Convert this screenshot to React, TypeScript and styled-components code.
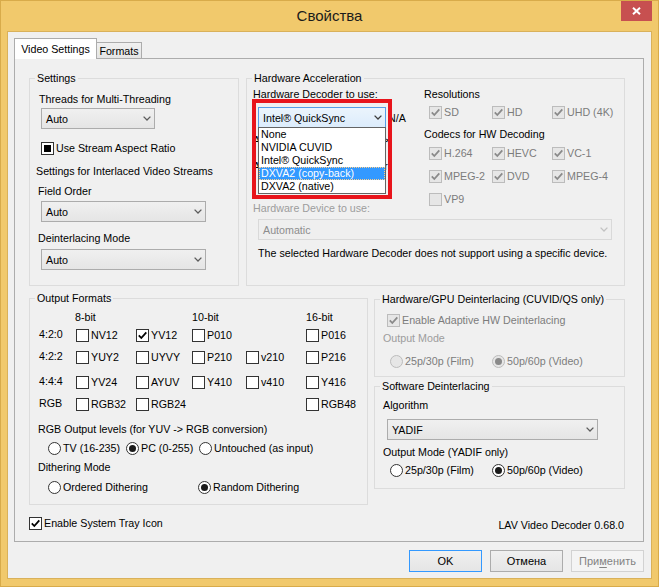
import React from "react";
import styled, { createGlobalStyle, css } from "styled-components";

const GlobalStyle = createGlobalStyle`
  html,
  body {
    margin: 0;
    padding: 0;
  }

  body {
    background: #f1c96c;
    color: #000;
    font-family: "Liberation Sans", Arial, sans-serif;
    font-size: 10.7px;
  }

  *,
  *::before,
  *::after {
    box-sizing: border-box;
  }
`;

type Space = { $mt?: number; $ml?: number };

const spacing = css<Space>`
  margin-top: ${(p) => p.$mt ?? 0}px;
  margin-left: ${(p) => p.$ml ?? 0}px;
`;

//---------------------------- window frame

const Window = styled.div`
  width: 659px;
  height: 587px;
  display: flex;
  flex-direction: column;
  background: #f1c96c;
  border: 1px solid #d8ab4a;
`;

const TitleBar = styled.div`
  height: 30px;
  display: grid;
  grid-template-columns: 1fr auto 1fr;
  align-items: start;
`;

const Title = styled.div`
  grid-column: 2;
  font-size: 15px;
  line-height: 30px;
  color: #1b1b1b;
`;

const CloseButton = styled.div`
  grid-column: 3;
  justify-self: end;
  width: 31px;
  height: 20px;
  margin-right: 6px;
  display: flex;
  align-items: center;
  justify-content: center;
  background: #c75050;
`;

const Client = styled.div`
  flex: 1;
  margin: 0 6px 7px;
  padding: 6px 7px 0 6px;
  display: flex;
  flex-direction: column;
  background: #f0f0f0;
  border: 1px solid #d9b15a;
`;

//---------------------------- tabs

const TabStrip = styled.div`
  height: 20px;
  display: flex;
  align-items: flex-end;
`;

const Tab = styled.div<{ $active?: boolean; $w: number }>`
  width: ${(p) => p.$w}px;
  display: flex;
  align-items: center;
  justify-content: center;
  white-space: nowrap;
  border: 1px solid #acacac;
  border-bottom: none;

  ${(p) =>
    p.$active
      ? css`
          position: relative;
          z-index: 1;
          height: 21px;
          margin-bottom: -1px;
          background: #fff;
        `
      : css`
          height: 16px;
          border-left: none;
          background: linear-gradient(#f0f0f0, #e5e5e5);
        `}
`;

const TabPage = styled.div`
  width: 630px;
  height: 484px;
  padding: 12px 17px 0 14px;
  display: flex;
  flex-direction: column;
  background: #f0f0f0;
  border: 1px solid #acacac;
`;

//---------------------------- group boxes

const Row = styled.div<Space & { $cols: string; $gap: number }>`
  ${spacing};
  display: grid;
  grid-template-columns: ${(p) => p.$cols};
  column-gap: ${(p) => p.$gap}px;
  align-items: start;
`;

const Column = styled.div`
  display: flex;
  flex-direction: column;
`;

const Group = styled.fieldset<Space & { $w: number; $h: number }>`
  ${spacing};
  width: ${(p) => p.$w}px;
  height: ${(p) => p.$h}px;
  min-width: 0;
  padding: 0;
  border: 1px solid #dcdcdc;
`;

const GroupTitle = styled.legend`
  height: 14px;
  margin-left: 5px;
  padding: 0 2px;
  line-height: 14px;
`;

const Stack = styled.div<Space>`
  ${spacing};
  display: flex;
  flex-direction: column;
  align-items: flex-start;
`;

const Text = styled.div<Space & { $muted?: boolean }>`
  ${spacing};
  height: 13px;
  line-height: 13px;
  white-space: nowrap;
  color: ${(p) => (p.$muted ? "#9d9d9d" : "#000")};
`;

//---------------------------- combo boxes

type ComboState = "normal" | "open" | "disabled";

const ComboBox = styled.div<Space & { $w: number; $state?: ComboState }>`
  ${spacing};
  flex: none;
  width: ${(p) => p.$w}px;
  height: 21px;
  padding: 0 3px 0 4px;
  display: flex;
  align-items: center;
  justify-content: space-between;
  white-space: nowrap;
  color: #000;
  border: 1px solid #acacac;
  background: linear-gradient(#f0f0f0, #e5e5e5);

  ${(p) =>
    p.$state === "open" &&
    css`
      border-color: #569de5;
      background: linear-gradient(#ebf4fc, #dcecfc);
    `}

  ${(p) =>
    p.$state === "disabled" &&
    css`
      color: #8d8d8d;
      border-color: #d9d9d9;
      background: #efefef;
    `}
`;

const Chevron = ({ color }: { color: string }) => (
  <svg width="8" height="5" viewBox="0 0 8 5">
    <path d="M0.6 0.6 L4 4 L7.4 0.6" fill="none" stroke={color} strokeWidth="1.3" />
  </svg>
);

interface ICombo extends Space {
  width: number;
  value: string;
  state?: ComboState;
}

const Combo: React.FunctionComponent<ICombo> = ({ width, value, state = "normal", $mt, $ml }) => (
  <ComboBox $w={width} $state={state} $mt={$mt} $ml={$ml}>
    {value}
    <Chevron color={state === "disabled" ? "#c2c2c2" : state === "open" ? "#3c3c3c" : "#5c5c5c"} />
  </ComboBox>
);

//---------------------------- check boxes & radios

const OptionRow = styled.div<Space & { $disabled?: boolean }>`
  ${spacing};
  height: 13px;
  display: flex;
  align-items: center;
  gap: 2px;
  line-height: 13px;
  white-space: nowrap;
  color: ${(p) => (p.$disabled ? "#7c7c7c" : "#000")};
`;

const CheckBox = styled.span<{ $disabled?: boolean }>`
  flex: none;
  width: 13px;
  height: 13px;
  display: inline-flex;
  align-items: center;
  justify-content: center;
  border: 1px solid ${(p) => (p.$disabled ? "#bcbcbc" : "#333")};
  background: ${(p) => (p.$disabled ? "#e6e6e6" : "#fff")};
`;

const MixedMark = styled.span`
  width: 7px;
  height: 7px;
  background: #000;
`;

const RadioCircle = styled.span<{ $disabled?: boolean; $on?: boolean }>`
  flex: none;
  width: 13px;
  height: 13px;
  display: inline-flex;
  align-items: center;
  justify-content: center;
  border-radius: 50%;
  border: 1px solid ${(p) => (p.$disabled ? "#bcbcbc" : "#333")};
  background: ${(p) => (p.$disabled ? "#e6e6e6" : "#fff")};

  &::after {
    content: "";
    display: ${(p) => (p.$on ? "block" : "none")};
    width: 7px;
    height: 7px;
    border-radius: 50%;
    background: ${(p) => (p.$disabled ? "#8a8a8a" : "#1a1a1a")};
  }
`;

interface IOption extends Space {
  label: string;
  checked?: boolean;
  mixed?: boolean;
  disabled?: boolean;
}

const Check: React.FunctionComponent<IOption> = ({ label, checked, mixed, disabled, $mt, $ml }) => (
  <OptionRow $mt={$mt} $ml={$ml} $disabled={disabled}>
    <CheckBox $disabled={disabled}>
      {checked && (
        <svg width="11" height="11" viewBox="0 0 11 11">
          <path
            d="M1.8 5.4 L4.3 8 L9.3 2.4"
            fill="none"
            stroke={disabled ? "#8a8a8a" : "#000"}
            strokeWidth="1.8"
          />
        </svg>
      )}
      {mixed && <MixedMark />}
    </CheckBox>
    {label}
  </OptionRow>
);

const Radio: React.FunctionComponent<IOption> = ({ label, checked, disabled, $mt, $ml }) => (
  <OptionRow $mt={$mt} $ml={$ml} $disabled={disabled}>
    <RadioCircle $on={checked} $disabled={disabled} />
    {label}
  </OptionRow>
);

const OptionGrid = styled.div<Space & { $cols: string; $rowGap?: number }>`
  ${spacing};
  display: grid;
  grid-template-columns: ${(p) => p.$cols};
  row-gap: ${(p) => p.$rowGap ?? 0}px;
  align-items: center;
`;

//---------------------------- hardware acceleration

const HwGrid = styled.div`
  padding-left: 6px;
  display: grid;
  grid-template-columns: 171px auto;
  align-items: start;
`;

const DecoderRow = styled.div<Space>`
  ${spacing};
  position: relative;
  display: flex;
  align-items: center;
  gap: 2px;
  white-space: nowrap;
`;

const InfoRow = styled.div<Space>`
  ${spacing};
  width: 136px;
  height: 13px;
  display: flex;
  justify-content: space-between;
  line-height: 13px;
  white-space: nowrap;
`;

const DropList = styled.ul`
  position: absolute;
  left: 0;
  top: 20px;
  z-index: 3;
  width: 128px;
  margin: 0;
  padding: 0;
  list-style: none;
  background: #fff;
  border: 1px solid #646464;
`;

const DropItem = styled.li<{ $selected?: boolean }>`
  height: 13px;
  padding: 0 2px;
  line-height: 13px;
  white-space: nowrap;

  ${(p) =>
    p.$selected &&
    css`
      color: #fff;
      background: #3399ff;
      outline: 1px dotted #ffcf8a;
      outline-offset: -1px;
    `}
`;

const Highlight = styled.div`
  position: absolute;
  left: -6px;
  top: -8px;
  z-index: 4;
  width: 140px;
  height: 100px;
  border: 4px solid #e8141b;
  pointer-events: none;
`;

//---------------------------- output formats

const FormatGrid = styled.div<Space>`
  ${spacing};
  display: grid;
  grid-template-columns: 37px 60px 56px 54px 60px auto;
  grid-template-rows: 16px 20px 24px 26px 18px;
  align-items: center;
`;

type Cell = { label: string; on?: boolean } | null;

const formatRows: { name: string; cells: Cell[] }[] = [
  { name: "4:2:0", cells: [{ label: "NV12" }, { label: "YV12", on: true }, { label: "P010" }, null, { label: "P016" }] },
  { name: "4:2:2", cells: [{ label: "YUY2" }, { label: "UYVY" }, { label: "P210" }, { label: "v210" }, { label: "P216" }] },
  { name: "4:4:4", cells: [{ label: "YV24" }, { label: "AYUV" }, { label: "Y410" }, { label: "v410" }, { label: "Y416" }] },
  { name: "RGB", cells: [{ label: "RGB32" }, { label: "RGB24" }, null, null, { label: "RGB48" }] },
];

//---------------------------- footer & buttons

const Footer = styled.div<Space>`
  ${spacing};
  padding-right: 2px;
  display: flex;
  align-items: flex-start;
  justify-content: space-between;
`;

const ButtonBar = styled.div`
  margin-top: 8px;
  display: flex;
  justify-content: flex-end;
  gap: 8px;
`;

const Button = styled.div<{ $kind?: "default" | "normal" | "disabled" }>`
  width: 73px;
  height: 22px;
  display: flex;
  align-items: center;
  justify-content: center;
  font-size: 11px;
  border: 1px solid #acacac;
  background: linear-gradient(#f0f0f0, #e5e5e5);

  ${(p) =>
    p.$kind === "default" &&
    css`
      border-color: #3399ff;
    `}

  ${(p) =>
    p.$kind === "disabled" &&
    css`
      color: #838383;
      border-color: #d2d2d2;
      background: #f4f4f4;
    `}

  u {
    text-decoration-thickness: 1px;
    text-underline-offset: 2px;
  }
`;

//----------------------------

const App: React.FunctionComponent = () => {
  return (
    <>
      <GlobalStyle />
      <Window>
        <TitleBar>
          <Title>Свойства</Title>
          <CloseButton>
            <svg width="9" height="8" viewBox="0 0 9 8">
              <path d="M1 0.8 L8 7.2 M8 0.8 L1 7.2" stroke="#fff" strokeWidth="2" />
            </svg>
          </CloseButton>
        </TitleBar>

        <Client>
          <TabStrip>
            <Tab $active $w={83}>
              Video Settings
            </Tab>
            <Tab $w={45}>Formats</Tab>
          </TabStrip>

          <TabPage>
            <Row $cols="210px 379px" $gap={7}>
              <Group $w={210} $h={215}>
                <GroupTitle>Settings</GroupTitle>
                <Stack>
                  <Text $mt={8} $ml={9}>
                    Threads for Multi-Threading
                  </Text>
                  <Combo $mt={2} $ml={11} width={114} value="Auto" />
                  <Check $mt={13} $ml={11} mixed label="Use Stream Aspect Ratio" />
                  <Text $mt={10} $ml={6}>
                    Settings for Interlaced Video Streams
                  </Text>
                  <Text $mt={7} $ml={8}>
                    Field Order
                  </Text>
                  <Combo $mt={3} $ml={11} width={165} value="Auto" />
                  <Text $mt={10} $ml={8}>
                    Deinterlacing Mode
                  </Text>
                  <Combo $mt={4} $ml={11} width={165} value="Auto" />
                </Stack>
              </Group>

              <Group $w={379} $h={215}>
                <GroupTitle>Hardware Acceleration</GroupTitle>
                <Stack>
                  <HwGrid>
                    <Column>
                      <Text $mt={3}>Hardware Decoder to use:</Text>
                      <DecoderRow $mt={6} $ml={5}>
                        <Combo width={128} value="Intel® QuickSync" state="open" />
                        <span>N/A</span>
                        <DropList>
                          <DropItem>None</DropItem>
                          <DropItem>NVIDIA CUVID</DropItem>
                          <DropItem>Intel® QuickSync</DropItem>
                          <DropItem $selected>DXVA2 (copy-back)</DropItem>
                          <DropItem>DXVA2 (native)</DropItem>
                        </DropList>
                        <Highlight />
                      </DecoderRow>
                      <InfoRow $mt={6}>
                        <span>Active Decoder:</span>
                        <span>&lt;none&gt;</span>
                      </InfoRow>
                      <Text $mt={13}>Active Hardware Accelerator:</Text>
                      <Text $mt={29} $muted>
                        Hardware Device to use:
                      </Text>
                    </Column>

                    <Column>
                      <Text $mt={3}>Resolutions</Text>
                      <OptionGrid $mt={5} $ml={5} $cols="63px 60px auto">
                        <Check disabled checked label="SD" />
                        <Check disabled checked label="HD" />
                        <Check disabled checked label="UHD (4K)" />
                      </OptionGrid>
                      <Text $mt={9}>Codecs for HW Decoding</Text>
                      <OptionGrid $mt={6} $ml={5} $cols="63px 60px auto" $rowGap={10}>
                        <Check disabled checked label="H.264" />
                        <Check disabled checked label="HEVC" />
                        <Check disabled checked label="VC-1" />
                        <Check disabled checked label="MPEG-2" />
                        <Check disabled checked label="DVD" />
                        <Check disabled checked label="MPEG-4" />
                        <Check disabled label="VP9" />
                      </OptionGrid>
                    </Column>
                  </HwGrid>
                  <Combo $mt={4} $ml={11} width={354} value="Automatic" state="disabled" />
                  <Text $mt={7} $ml={11}>
                    The selected Hardware Decoder does not support using a specific device.
                  </Text>
                </Stack>
              </Group>
            </Row>

            <Row $mt={5} $cols="339px 251px" $gap={6}>
              <Group $w={339} $h={214}>
                <GroupTitle>Output Formats</GroupTitle>
                <Stack>
                  <FormatGrid $mt={4} $ml={9}>
                    <span />
                    <Text $ml={-1}>8-bit</Text>
                    <span />
                    <Text>10-bit</Text>
                    <span />
                    <Text>16-bit</Text>
                    {formatRows.map((row) => (
                      <React.Fragment key={row.name}>
                        <Text $mt={-1}>{row.name}</Text>
                        {row.cells.map((cell, i) =>
                          cell ? (
                            <Check key={i} label={cell.label} checked={cell.on} />
                          ) : (
                            <span key={i} />
                          )
                        )}
                      </React.Fragment>
                    ))}
                  </FormatGrid>
                  <Text $mt={10} $ml={8}>
                    RGB Output levels (for YUV -&gt; RGB conversion)
                  </Text>
                  <OptionGrid $mt={6} $ml={18} $cols="78px 73px auto">
                    <Radio label="TV (16-235)" />
                    <Radio label="PC (0-255)" checked />
                    <Radio label="Untouched (as input)" />
                  </OptionGrid>
                  <Text $mt={6} $ml={8}>
                    Dithering Mode
                  </Text>
                  <OptionGrid $mt={7} $ml={18} $cols="150px auto">
                    <Radio label="Ordered Dithering" />
                    <Radio label="Random Dithering" checked />
                  </OptionGrid>
                </Stack>
              </Group>

              <Column>
                <Group $mt={1} $w={251} $h={85}>
                  <GroupTitle>Hardware/GPU Deinterlacing (CUVID/QS only)</GroupTitle>
                  <Stack>
                    <Check $mt={8} $ml={12} disabled checked label="Enable Adaptive HW Deinterlacing" />
                    <Text $mt={5} $ml={8} $muted>
                      Output Mode
                    </Text>
                    <OptionGrid $mt={10} $ml={15} $cols="102px auto">
                      <Radio disabled label="25p/30p (Film)" />
                      <Radio disabled checked label="50p/60p (Video)" />
                    </OptionGrid>
                  </Stack>
                </Group>

                <Group $mt={2} $w={251} $h={110}>
                  <GroupTitle>Software Deinterlacing</GroupTitle>
                  <Stack>
                    <Text $mt={6} $ml={8}>
                      Algorithm
                    </Text>
                    <Combo $mt={7} $ml={12} width={211} value="YADIF" />
                    <Text $mt={6} $ml={8}>
                      Output Mode (YADIF only)
                    </Text>
                    <OptionGrid $mt={5} $ml={15} $cols="102px auto">
                      <Radio label="25p/30p (Film)" />
                      <Radio label="50p/60p (Video)" checked />
                    </OptionGrid>
                  </Stack>
                </Group>
              </Column>
            </Row>

            <Footer $mt={12}>
              <Check checked label="Enable System Tray Icon" />
              <Text $mt={2}>LAV Video Decoder 0.68.0</Text>
            </Footer>
          </TabPage>

          <ButtonBar>
            <Button $kind="default">OK</Button>
            <Button>Отмена</Button>
            <Button $kind="disabled">
              <span>
                При<u>м</u>енить
              </span>
            </Button>
          </ButtonBar>
        </Client>
      </Window>
    </>
  );
};

export default App;
